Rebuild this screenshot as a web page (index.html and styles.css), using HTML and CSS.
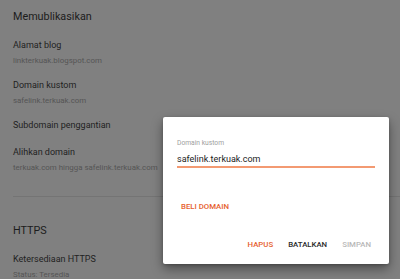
FILE: index.html
```html
<html>
<head>
<meta charset="UTF-8">
<meta name="viewport" content="width=device-width, initial-scale=1.0">
<title>Setelan - Memublikasikan</title>
<link rel="stylesheet" href="styles.css">
</head>
<body>
<div class="page">
  <div class="section">
    <h2 class="section-title">Memublikasikan</h2>
    <div class="item">
      <div class="item-title">Alamat blog</div>
      <div class="item-sub">linkterkuak.blogspot.com</div>
    </div>
    <div class="item">
      <div class="item-title">Domain kustom</div>
      <div class="item-sub">safelink.terkuak.com</div>
    </div>
    <div class="item item-single">
      <div class="item-title">Subdomain penggantian</div>
    </div>
    <div class="item">
      <div class="item-title">Alihkan domain</div>
      <div class="item-sub">terkuak.com hingga safelink.terkuak.com</div>
    </div>
  </div>
  <div class="divider"></div>
  <div class="section section-https">
    <h2 class="section-title">HTTPS</h2>
    <div class="item">
      <div class="item-title">Ketersediaan HTTPS</div>
      <div class="item-sub">Status: Tersedia</div>
    </div>
  </div>
</div>

<!-- dialog edit domain kustom -->
<div class="dialog">
  <label class="field-label">Domain kustom</label>
  <div class="field-input">safelink.terkuak.com</div>
  <button class="btn btn-orange btn-buy">BELI DOMAIN</button>
  <div class="actions">
    <button class="btn btn-orange">HAPUS</button>
    <button class="btn">BATALKAN</button>
    <button class="btn btn-disabled">SIMPAN</button>
  </div>
</div>
</body>
</html>
```

FILE: styles.css
```css
body {
  font-family: Roboto, "Liberation Sans", sans-serif;
  background-color: #808080;
  margin: 0;
  padding: 0;
  overflow: hidden;
}

.page {
  padding: 9px 0 0 13px;
}

.section-title {
  font-size: 10.8px;
  font-weight: normal;
  line-height: 16px;
  color: #1c1c1c;
  margin: 0 0 12px 0;
}

.item {
  padding-bottom: 8px;
}

.item-single {
  padding-bottom: 11px;
}

.item-title {
  font-size: 9px;
  line-height: 16px;
  color: #222;
}

.item-sub {
  font-size: 7.9px;
  line-height: 16px;
  color: #555;
}

.divider {
  height: 1px;
  background-color: #747474;
  margin-top: 12px;
}

.section-https {
  padding-top: 26px;
}

.dialog {
  position: absolute;
  left: 163px;
  top: 117px;
  width: 226px;
  box-sizing: border-box;
  padding: 21px 14px 13px 14px;
  background-color: #fff;
  border-radius: 2px;
  box-shadow: 0 5px 12px rgba(0, 0, 0, 0.4), 0 1px 3px rgba(0, 0, 0, 0.2);
}

.field-label {
  display: block;
  font-size: 6.7px;
  line-height: 10px;
  color: #a0a0a0;
}

.field-input {
  font-size: 9px;
  line-height: 14px;
  color: #222;
  margin-top: 4px;
  border-bottom: 2px solid #f39a72;
}

.btn {
  font-family: Roboto, "Liberation Sans", sans-serif;
  font-size: 7.8px;
  font-weight: 500;
  line-height: 12px;
  background: none;
  border: none;
  padding: 0 4px;
  color: #2a2a2a;
  cursor: pointer;
}

.btn-orange {
  color: #e6602e;
}

.btn-disabled {
  color: #b8b8b8;
}

.btn-buy {
  display: block;
  margin-top: 33px;
}

.actions {
  display: flex;
  justify-content: flex-end;
  gap: 7px;
  margin-top: 26px;
}
```
